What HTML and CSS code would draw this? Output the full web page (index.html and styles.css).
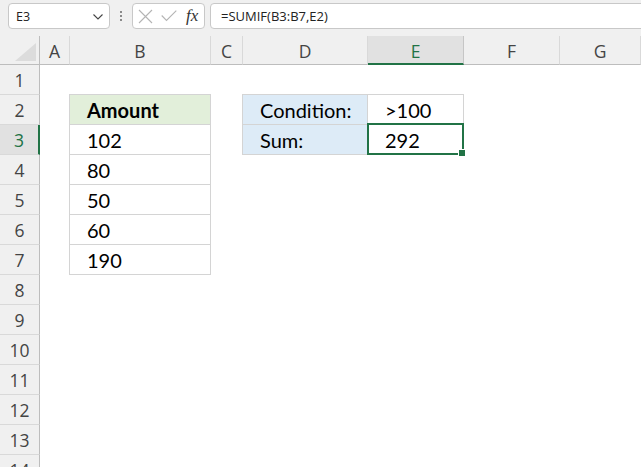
FILE: index.html
```html
<!DOCTYPE html>
<html>
<head>
<meta charset="utf-8">
<link rel="stylesheet" href="styles.css">
</head>
<body>
<div class="bar">
  <div class="namebox"><span class="nb-text">E3</span>
    <svg class="chev" width="10" height="6" viewBox="0 0 10 6"><path d="M0.5 0.5 L5 5 L9.5 0.5" fill="none" stroke="#444" stroke-width="1.1"/></svg>
  </div>
  <div class="dots"><i></i><i></i><i></i></div>
  <div class="fbtns">
    <svg width="15" height="15" viewBox="0 0 15 15"><path d="M1 1 L14 14 M14 1 L1 14" stroke="#b4b4b4" stroke-width="1.1" fill="none"/></svg>
    <svg width="16" height="12" viewBox="0 0 16 12"><path d="M0.7 5.5 L5.5 10.5 L15.3 0.7" stroke="#b4b4b4" stroke-width="1.1" fill="none"/></svg>
    <span class="fx">fx</span>
  </div>
  <div class="formula">=SUMIF(B3:B7,E2)</div>
</div>
<div class="sheet">
  <div class="corner"><svg width="21" height="18" viewBox="0 0 21 18"><polygon points="21,0 21,18 0,18" fill="#dcdcdc"/></svg></div>
  <div class="ch">A</div><div class="ch">B</div><div class="ch">C</div><div class="ch">D</div><div class="ch sel">E</div><div class="ch">F</div><div class="ch">G</div>

  <div class="rh">1</div><div class="c"></div><div class="c"></div><div class="c"></div><div class="c"></div><div class="c"></div><div class="c"></div><div class="c"></div>

  <div class="rh">2</div><div class="c"></div><div class="c t green bold">Amount</div><div class="c"></div><div class="c t blue">Condition:</div><div class="c t">&gt;100</div><div class="c"></div><div class="c"></div>

  <div class="rh sel">3</div><div class="c"></div><div class="c t">102</div><div class="c"></div><div class="c t blue">Sum:</div><div class="c t active">292</div><div class="c"></div><div class="c"></div>

  <div class="rh">4</div><div class="c"></div><div class="c t">80</div><div class="c"></div><div class="c"></div><div class="c"></div><div class="c"></div><div class="c"></div>

  <div class="rh">5</div><div class="c"></div><div class="c t">50</div><div class="c"></div><div class="c"></div><div class="c"></div><div class="c"></div><div class="c"></div>

  <div class="rh">6</div><div class="c"></div><div class="c t">60</div><div class="c"></div><div class="c"></div><div class="c"></div><div class="c"></div><div class="c"></div>

  <div class="rh">7</div><div class="c"></div><div class="c t">190</div><div class="c"></div><div class="c"></div><div class="c"></div><div class="c"></div><div class="c"></div>

  <div class="rh">8</div><div class="c"></div><div class="c"></div><div class="c"></div><div class="c"></div><div class="c"></div><div class="c"></div><div class="c"></div>
  <div class="rh">9</div><div class="c"></div><div class="c"></div><div class="c"></div><div class="c"></div><div class="c"></div><div class="c"></div><div class="c"></div>
  <div class="rh">10</div><div class="c"></div><div class="c"></div><div class="c"></div><div class="c"></div><div class="c"></div><div class="c"></div><div class="c"></div>
  <div class="rh">11</div><div class="c"></div><div class="c"></div><div class="c"></div><div class="c"></div><div class="c"></div><div class="c"></div><div class="c"></div>
  <div class="rh">12</div><div class="c"></div><div class="c"></div><div class="c"></div><div class="c"></div><div class="c"></div><div class="c"></div><div class="c"></div>
  <div class="rh">13</div><div class="c"></div><div class="c"></div><div class="c"></div><div class="c"></div><div class="c"></div><div class="c"></div><div class="c"></div>
  <div class="rh">14</div><div class="c"></div><div class="c"></div><div class="c"></div><div class="c"></div><div class="c"></div><div class="c"></div><div class="c"></div>
</div>
</body>
</html>
```

FILE: styles.css
```css
* { box-sizing: border-box; }
html, body { margin: 0; padding: 0; }
body {
  width: 641px;
  height: 467px;
  overflow: hidden;
  background: #ffffff;
  font-family: "Open Sans", "Noto Sans", sans-serif;
}

.bar {
  height: 36px;
  background: #f0f0f0;
  display: flex;
  align-items: flex-start;
  padding: 3px 0 0 8px;
}
.namebox {
  width: 102px;
  height: 26px;
  background: #fff;
  border: 1px solid #c8c8c8;
  border-radius: 4px;
  display: flex;
  align-items: center;
  justify-content: space-between;
  padding: 0 6px 0 7px;
}
.nb-text { font-size: 12.5px; color: #222; }
.chev { margin-top: 1px; }
.dots {
  width: 22px;
  height: 26px;
  display: flex;
  flex-direction: column;
  align-items: center;
  justify-content: center;
  gap: 2px;
}
.dots i {
  display: block;
  width: 2px;
  height: 2px;
  background: #8a8a8a;
}
.fbtns {
  width: 73px;
  height: 26px;
  background: #fff;
  border: 1px solid #c8c8c8;
  border-radius: 4px;
  display: flex;
  align-items: center;
  gap: 8px;
  padding: 0 0 0 5px;
}
.fx {
  font-family: "Liberation Serif", "DejaVu Serif", serif;
  font-style: italic;
  font-size: 17px;
  color: #333;
  margin-left: 1px;
}
.formula {
  flex: 1;
  margin-left: 5px;
  margin-right: -8px;
  height: 26px;
  background: #fff;
  border: 1px solid #c8c8c8;
  border-radius: 4px;
  display: flex;
  align-items: center;
  padding-left: 10px;
  font-size: 13px;
  color: #222;
}

.sheet {
  display: grid;
  grid-template-columns: 40px 30px 141px 32px 125px 96px 96px 1fr;
  grid-template-rows: 29px;
  grid-auto-rows: 30px;
}
.corner {
  background: #f0f0f0;
  border-right: 1px solid #bdbdbd;
  border-bottom: 1px solid #bdbdbd;
  display: flex;
  align-items: flex-end;
  justify-content: flex-end;
  padding: 0 3px 3px 0;
}
.ch {
  background: #f0f0f0;
  border-right: 1px solid #d9d9d9;
  border-bottom: 1px solid #bdbdbd;
  display: flex;
  align-items: center;
  justify-content: center;
  font-size: 17.5px;
  color: #444;
  padding-top: 1px;
}
.ch.sel {
  background: #e1e1e1;
  border-right-color: #c6c6c6;
  border-bottom: 2px solid #217346;
  color: #217346;
  padding-top: 2px;
}
.rh {
  background: #f0f0f0;
  border-right: 1px solid #bdbdbd;
  border-bottom: 1px solid #d9d9d9;
  display: flex;
  align-items: center;
  justify-content: center;
  font-size: 17.5px;
  color: #444;
}
.rh.sel {
  background: #e1e1e1;
  border-right: 2px solid #217346;
  color: #217346;
}

.c {
  border-right: 1px solid transparent;
  border-bottom: 1px solid transparent;
  display: flex;
  align-items: center;
  padding-left: 17px;
  padding-top: 1px;
  font-family: "Lato", "Open Sans", sans-serif;
  font-size: 20px;
  color: #000;
}
.t {
  border-right-color: #d4d4d4;
  border-bottom-color: #d4d4d4;
  box-shadow: -1px 0 0 #d4d4d4, 0 -1px 0 #d4d4d4, -1px -1px 0 #d4d4d4;
}
.green { background: #e2efda; }
.blue { background: #ddebf7; }
.bold { font-weight: 700; }
.active { position: relative; }
.active::after {
  content: "";
  position: absolute;
  left: -1px;
  top: -2px;
  right: -1px;
  bottom: -1px;
  border: 2px solid #217346;
  z-index: 2;
}
.active::before {
  content: "";
  position: absolute;
  right: -3px;
  bottom: -3px;
  width: 6px;
  height: 6px;
  background: #217346;
  border: 1px solid #fff;
  z-index: 3;
}
```
